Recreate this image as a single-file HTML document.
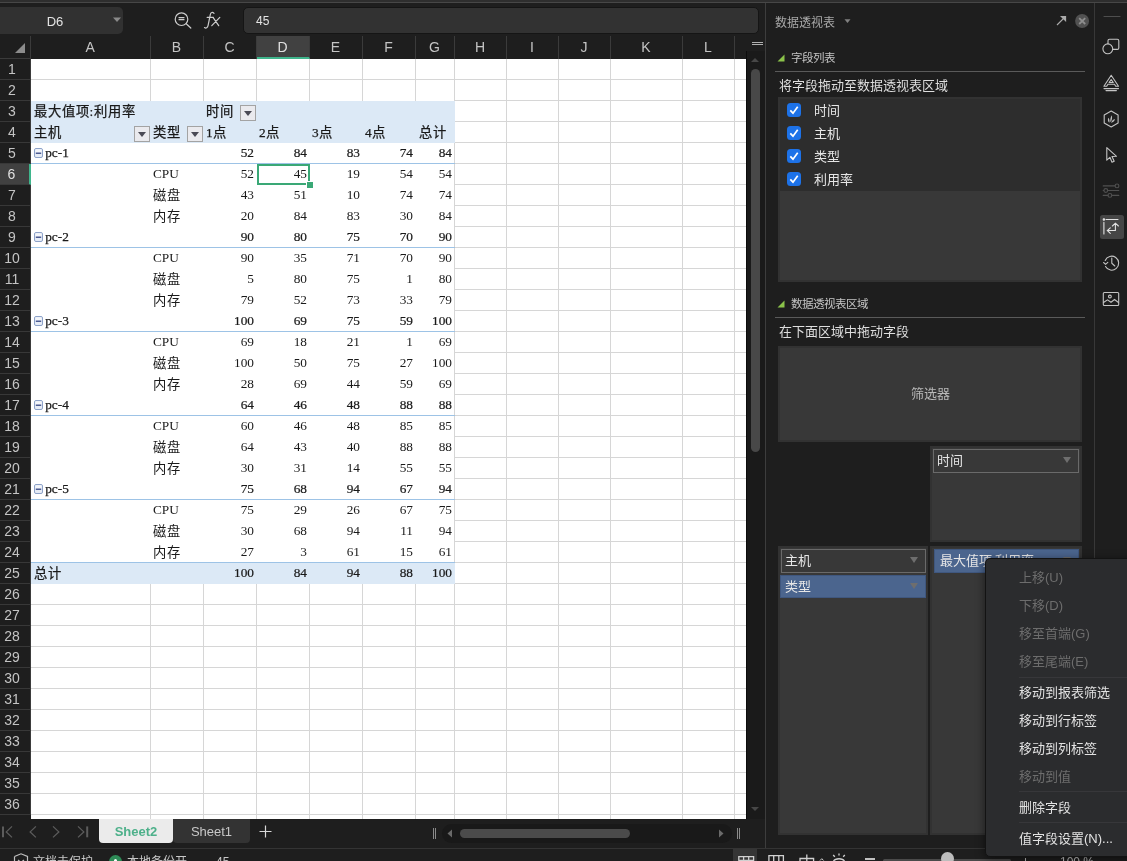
<!DOCTYPE html>
<html lang="zh-CN">
<head>
<meta charset="utf-8">
<title>Sheet</title>
<style>
html,body{margin:0;padding:0;}
body{width:1127px;height:861px;overflow:hidden;background:#1e1e1e;position:relative;-webkit-font-smoothing:antialiased;will-change:transform;font-family:"Liberation Sans",sans-serif;color:#d0d0d0;}
.abs{position:absolute;}
#top{left:0;top:0;width:1127px;height:2px;background:#2e2e2e;border-bottom:1px solid #474747;}
#namebox{left:-4px;top:7px;width:127px;height:27px;background:#313131;border-radius:5px;}
#namebox span{position:absolute;left:4px;width:110px;top:1px;line-height:27px;text-align:center;font-size:13px;color:#e4e4e4;}
#fbar{left:242.500px;top:7px;width:514px;height:25px;background:#323232;border:1px solid #151515;border-radius:5px;}
#fbar span{position:absolute;left:12.5px;top:1px;line-height:25px;font-size:12px;color:#e4e4e4;}
.ch{position:absolute;top:36px;height:22.5px;line-height:22px;text-align:center;font-size:14px;color:#c4c4c4;box-sizing:border-box;border-right:1px solid #3b3b3b;}
.rh{position:absolute;left:0;width:31px;border-right:1px solid #3b3b3b;height:21px;line-height:20px;font-size:14px;color:#c4c4c4;border-bottom:1px solid #383838;box-sizing:border-box;padding-right:6px;text-align:center;}
#sheet{left:31px;top:58.5px;width:715px;height:760px;background:#fff;overflow:hidden;}
.vl{position:absolute;width:1px;background:#d6d6d6;}
.hl{position:absolute;height:1px;background:#d6d6d6;}
.c{position:absolute;height:21px;line-height:20px;font-family:"Liberation Serif",serif;font-size:13.3px;color:#1a1a1a;white-space:nowrap;}
.b{-webkit-text-stroke:0.25px #1a1a1a;}
.k{letter-spacing:0.9px;margin-top:1px;}
.cj{margin-top:1px;letter-spacing:0.8px;}
.nb{-webkit-text-stroke:0.22px #1a1a1a;}
.r{text-align:right;}
.fb{position:absolute;width:16px;height:15.5px;box-sizing:border-box;border:1px solid #a3a3a3;background:#eaeaee;}
.fb:after{content:"";position:absolute;left:2.6px;top:5px;border-left:4.4px solid transparent;border-right:4.4px solid transparent;border-top:5px solid #4a4a55;}
.pt{position:absolute;font-size:12px;color:#c4c4c4;white-space:nowrap;}
.fld{position:absolute;left:814px;font-size:13px;color:#e6e6e6;line-height:16px;}
.cb{position:absolute;left:787px;width:14px;height:14px;border-radius:3.500px;background:#1d72e8;}
.cb svg{position:absolute;left:0;top:0;}
.box{position:absolute;background:#383838;border:2px solid #323232;box-sizing:border-box;}
.item{position:absolute;height:23.5px;box-sizing:border-box;border:1px solid #6a6a6a;font-size:13px;line-height:21px;color:#e6e6e6;padding-left:3px;}
.item:after{content:"";position:absolute;right:7.500px;top:7px;border-left:4.5px solid transparent;border-right:4.5px solid transparent;border-top:6px solid #6e6e6e;}
.item.sel{background:#4b658e;border-color:#3f577f;}
.mi{position:absolute;left:33px;margin-top:0.8px;font-size:13px;white-space:nowrap;line-height:16px;}
.dis{color:#6d6d6d;}
.en{color:#e2e2e2;}
.ms{position:absolute;left:33px;right:0;height:1px;background:#37373a;}
</style>
</head>
<body>
<div id="top" class="abs"></div>
<div id="namebox" class="abs"><span>D6</span></div>
<svg class="abs" style="left:112px;top:17px" width="10" height="6"><path d="M1 0.5 L9 0.5 L5 5 Z" fill="#8a8a8a"/></svg>
<svg class="abs" style="left:170px;top:8px" width="56" height="24" viewBox="170 8 56 24" fill="none" stroke="#cdcdcd" stroke-width="1.2" stroke-linecap="round"><circle cx="181.500" cy="19.2" r="6.3"/><path d="M179 17.600 H184 M179 19.700 H184 M186.200 23.700 L190.800 28"/><path d="M214 13.300 C212.600 11.800 210.800 12.200 210.300 14.600 L208.100 25.300 C207.600 27.800 206 28.600 204.500 27.600 M207.200 17.400 H213.400 M213 17.400 L218.700 25.700 M219.800 17.400 L211.800 25.700"/></svg>
<div id="fbar" class="abs"><span>45</span></div>

<svg class="abs" style="left:14px;top:42px" width="12" height="12"><path d="M11 1 L11 11 L1 11 Z" fill="#8c8c8c"/></svg>
<div class="abs" style="left:30px;top:36px;width:1px;height:22px;background:#3b3b3b"></div>
<div class="abs" style="left:0;top:58px;width:31px;height:1px;background:#3b3b3b"></div>
<div class="ch" style="left:31px;width:119.5px;">A</div>
<div class="ch" style="left:150.5px;width:53.0px;">B</div>
<div class="ch" style="left:203.5px;width:53.0px;">C</div>
<div class="ch" style="left:256.5px;width:53.0px;background:#414141;border-bottom:2px solid #3fb58c;color:#e0e0e0;">D</div>
<div class="ch" style="left:309.5px;width:53.0px;">E</div>
<div class="ch" style="left:362.5px;width:53.0px;">F</div>
<div class="ch" style="left:415.5px;width:39.0px;">G</div>
<div class="ch" style="left:454.5px;width:52.0px;">H</div>
<div class="ch" style="left:506.5px;width:52.0px;">I</div>
<div class="ch" style="left:558.5px;width:52.0px;">J</div>
<div class="ch" style="left:610.5px;width:72.0px;">K</div>
<div class="ch" style="left:682.5px;width:52.0px;">L</div>
<div class="rh" style="top:58.5px;">1</div>
<div class="rh" style="top:79.5px;">2</div>
<div class="rh" style="top:100.5px;">3</div>
<div class="rh" style="top:121.5px;">4</div>
<div class="rh" style="top:142.5px;">5</div>
<div class="rh" style="top:163.5px;background:#414141;border-right:2px solid #3fb58c;color:#e0e0e0;width:31px;">6</div>
<div class="rh" style="top:184.5px;">7</div>
<div class="rh" style="top:205.5px;">8</div>
<div class="rh" style="top:226.5px;">9</div>
<div class="rh" style="top:247.5px;">10</div>
<div class="rh" style="top:268.5px;">11</div>
<div class="rh" style="top:289.5px;">12</div>
<div class="rh" style="top:310.5px;">13</div>
<div class="rh" style="top:331.5px;">14</div>
<div class="rh" style="top:352.5px;">15</div>
<div class="rh" style="top:373.5px;">16</div>
<div class="rh" style="top:394.5px;">17</div>
<div class="rh" style="top:415.5px;">18</div>
<div class="rh" style="top:436.5px;">19</div>
<div class="rh" style="top:457.5px;">20</div>
<div class="rh" style="top:478.5px;">21</div>
<div class="rh" style="top:499.5px;">22</div>
<div class="rh" style="top:520.5px;">23</div>
<div class="rh" style="top:541.5px;">24</div>
<div class="rh" style="top:562.5px;">25</div>
<div class="rh" style="top:583.5px;">26</div>
<div class="rh" style="top:604.5px;">27</div>
<div class="rh" style="top:625.5px;">28</div>
<div class="rh" style="top:646.5px;">29</div>
<div class="rh" style="top:667.5px;">30</div>
<div class="rh" style="top:688.5px;">31</div>
<div class="rh" style="top:709.5px;">32</div>
<div class="rh" style="top:730.5px;">33</div>
<div class="rh" style="top:751.5px;">34</div>
<div class="rh" style="top:772.5px;">35</div>
<div class="rh" style="top:793.5px;">36</div>
<div id="sheet" class="abs">
<div class="vl" style="left:119.0px;top:0;height:42px"></div>
<div class="vl" style="left:119.0px;top:525.0px;height:236px"></div>
<div class="vl" style="left:172.0px;top:0;height:42px"></div>
<div class="vl" style="left:172.0px;top:525.0px;height:236px"></div>
<div class="vl" style="left:225.0px;top:0;height:42px"></div>
<div class="vl" style="left:225.0px;top:525.0px;height:236px"></div>
<div class="vl" style="left:278.0px;top:0;height:42px"></div>
<div class="vl" style="left:278.0px;top:525.0px;height:236px"></div>
<div class="vl" style="left:331.0px;top:0;height:42px"></div>
<div class="vl" style="left:331.0px;top:525.0px;height:236px"></div>
<div class="vl" style="left:384.0px;top:0;height:42px"></div>
<div class="vl" style="left:384.0px;top:525.0px;height:236px"></div>
<div class="vl" style="left:423.0px;top:0;height:760px"></div>
<div class="vl" style="left:475.0px;top:0;height:760px"></div>
<div class="vl" style="left:527.0px;top:0;height:760px"></div>
<div class="vl" style="left:579.0px;top:0;height:760px"></div>
<div class="vl" style="left:651.0px;top:0;height:760px"></div>
<div class="vl" style="left:703.0px;top:0;height:760px"></div>
<div class="hl" style="left:0;top:20.5px;width:715px"></div>
<div class="hl" style="left:423.5px;top:41.5px;width:291.5px"></div>
<div class="hl" style="left:423.5px;top:62.5px;width:291.5px"></div>
<div class="hl" style="left:423.5px;top:83.5px;width:291.5px"></div>
<div class="hl" style="left:423.5px;top:104.5px;width:291.5px"></div>
<div class="hl" style="left:423.5px;top:125.5px;width:291.5px"></div>
<div class="hl" style="left:423.5px;top:146.5px;width:291.5px"></div>
<div class="hl" style="left:423.5px;top:167.5px;width:291.5px"></div>
<div class="hl" style="left:423.5px;top:188.5px;width:291.5px"></div>
<div class="hl" style="left:423.5px;top:209.5px;width:291.5px"></div>
<div class="hl" style="left:423.5px;top:230.5px;width:291.5px"></div>
<div class="hl" style="left:423.5px;top:251.5px;width:291.5px"></div>
<div class="hl" style="left:423.5px;top:272.5px;width:291.5px"></div>
<div class="hl" style="left:423.5px;top:293.5px;width:291.5px"></div>
<div class="hl" style="left:423.5px;top:314.5px;width:291.5px"></div>
<div class="hl" style="left:423.5px;top:335.5px;width:291.5px"></div>
<div class="hl" style="left:423.5px;top:356.5px;width:291.5px"></div>
<div class="hl" style="left:423.5px;top:377.5px;width:291.5px"></div>
<div class="hl" style="left:423.5px;top:398.5px;width:291.5px"></div>
<div class="hl" style="left:423.5px;top:419.5px;width:291.5px"></div>
<div class="hl" style="left:423.5px;top:440.5px;width:291.5px"></div>
<div class="hl" style="left:423.5px;top:461.5px;width:291.5px"></div>
<div class="hl" style="left:423.5px;top:482.5px;width:291.5px"></div>
<div class="hl" style="left:423.5px;top:503.5px;width:291.5px"></div>
<div class="hl" style="left:423.5px;top:524.5px;width:291.5px"></div>
<div class="hl" style="left:0;top:545.5px;width:715px"></div>
<div class="hl" style="left:0;top:566.5px;width:715px"></div>
<div class="hl" style="left:0;top:587.5px;width:715px"></div>
<div class="hl" style="left:0;top:608.5px;width:715px"></div>
<div class="hl" style="left:0;top:629.5px;width:715px"></div>
<div class="hl" style="left:0;top:650.5px;width:715px"></div>
<div class="hl" style="left:0;top:671.5px;width:715px"></div>
<div class="hl" style="left:0;top:692.5px;width:715px"></div>
<div class="hl" style="left:0;top:713.5px;width:715px"></div>
<div class="hl" style="left:0;top:734.5px;width:715px"></div>
<div class="hl" style="left:0;top:755.5px;width:715px"></div>
<div class="abs" style="left:0;top:42.5px;width:424.0px;height:41.5px;background:#dce9f6"></div>
<div class="abs" style="left:0;top:504.0px;width:424.0px;height:21px;background:#dce9f6"></div>
<div class="hl" style="left:0;top:104.5px;width:423.5px;background:#9dc3e6"></div>
<div class="hl" style="left:0;top:188.5px;width:423.5px;background:#9dc3e6"></div>
<div class="hl" style="left:0;top:272.5px;width:423.5px;background:#9dc3e6"></div>
<div class="hl" style="left:0;top:356.5px;width:423.5px;background:#9dc3e6"></div>
<div class="hl" style="left:0;top:440.5px;width:423.5px;background:#9dc3e6"></div>
<div class="hl" style="left:0;top:503.5px;width:423.5px;background:#9dc3e6"></div>
<div class="c b k" style="left:3px;top:42.0px">最大值项:利用率</div>
<div class="c b k" style="left:175px;top:42.0px">时间</div>
<div class="fb" style="left:209px;top:46.5px"></div>
<div class="c b k" style="left:3px;top:63.0px">主机</div>
<div class="fb" style="left:103.19999999999999px;top:67.5px"></div>
<div class="c b k" style="left:122px;top:63.0px">类型</div>
<div class="fb" style="left:156.1px;top:67.5px"></div>
<div class="c b cj" style="left:175px;top:63.0px">1点</div>
<div class="c b cj" style="left:228px;top:63.0px">2点</div>
<div class="c b cj" style="left:281px;top:63.0px">3点</div>
<div class="c b cj" style="left:334px;top:63.0px">4点</div>
<div class="c b r k" style="left:384.5px;width:31.0px;top:63.0px">总计</div>
<svg class="abs" style="left:3px;top:89.5px" width="10" height="11"><rect x="0.5" y="0.5" width="8" height="9" rx="1.500" fill="#e6ecf6" stroke="#8da2c9"/><path d="M1.500 3 H7.500" stroke="#f4f6fa" stroke-width="3"/><path d="M1.800 5.200 H7.200" stroke="#27397a" stroke-width="1.200"/></svg>
<div class="c b" style="left:14.200000000000003px;top:84.0px">pc-1</div>
<div class="c r nb" style="left:172.5px;width:50.5px;top:84.0px">52</div>
<div class="c r nb" style="left:225.5px;width:50.5px;top:84.0px">84</div>
<div class="c r nb" style="left:278.5px;width:50.5px;top:84.0px">83</div>
<div class="c r nb" style="left:331.5px;width:50.5px;top:84.0px">74</div>
<div class="c r nb" style="left:384.5px;width:36.5px;top:84.0px">84</div>
<div class="c" style="left:122px;top:105.0px">CPU</div>
<div class="c r" style="left:172.5px;width:50.5px;top:105.0px">52</div>
<div class="c r" style="left:225.5px;width:50.5px;top:105.0px">45</div>
<div class="c r" style="left:278.5px;width:50.5px;top:105.0px">19</div>
<div class="c r" style="left:331.5px;width:50.5px;top:105.0px">54</div>
<div class="c r" style="left:384.5px;width:36.5px;top:105.0px">54</div>
<div class="c cj" style="left:122px;top:126.0px">磁盘</div>
<div class="c r" style="left:172.5px;width:50.5px;top:126.0px">43</div>
<div class="c r" style="left:225.5px;width:50.5px;top:126.0px">51</div>
<div class="c r" style="left:278.5px;width:50.5px;top:126.0px">10</div>
<div class="c r" style="left:331.5px;width:50.5px;top:126.0px">74</div>
<div class="c r" style="left:384.5px;width:36.5px;top:126.0px">74</div>
<div class="c cj" style="left:122px;top:147.0px">内存</div>
<div class="c r" style="left:172.5px;width:50.5px;top:147.0px">20</div>
<div class="c r" style="left:225.5px;width:50.5px;top:147.0px">84</div>
<div class="c r" style="left:278.5px;width:50.5px;top:147.0px">83</div>
<div class="c r" style="left:331.5px;width:50.5px;top:147.0px">30</div>
<div class="c r" style="left:384.5px;width:36.5px;top:147.0px">84</div>
<svg class="abs" style="left:3px;top:173.5px" width="10" height="11"><rect x="0.5" y="0.5" width="8" height="9" rx="1.500" fill="#e6ecf6" stroke="#8da2c9"/><path d="M1.500 3 H7.500" stroke="#f4f6fa" stroke-width="3"/><path d="M1.800 5.200 H7.200" stroke="#27397a" stroke-width="1.200"/></svg>
<div class="c b" style="left:14.200000000000003px;top:168.0px">pc-2</div>
<div class="c r nb" style="left:172.5px;width:50.5px;top:168.0px">90</div>
<div class="c r nb" style="left:225.5px;width:50.5px;top:168.0px">80</div>
<div class="c r nb" style="left:278.5px;width:50.5px;top:168.0px">75</div>
<div class="c r nb" style="left:331.5px;width:50.5px;top:168.0px">70</div>
<div class="c r nb" style="left:384.5px;width:36.5px;top:168.0px">90</div>
<div class="c" style="left:122px;top:189.0px">CPU</div>
<div class="c r" style="left:172.5px;width:50.5px;top:189.0px">90</div>
<div class="c r" style="left:225.5px;width:50.5px;top:189.0px">35</div>
<div class="c r" style="left:278.5px;width:50.5px;top:189.0px">71</div>
<div class="c r" style="left:331.5px;width:50.5px;top:189.0px">70</div>
<div class="c r" style="left:384.5px;width:36.5px;top:189.0px">90</div>
<div class="c cj" style="left:122px;top:210.0px">磁盘</div>
<div class="c r" style="left:172.5px;width:50.5px;top:210.0px">5</div>
<div class="c r" style="left:225.5px;width:50.5px;top:210.0px">80</div>
<div class="c r" style="left:278.5px;width:50.5px;top:210.0px">75</div>
<div class="c r" style="left:331.5px;width:50.5px;top:210.0px">1</div>
<div class="c r" style="left:384.5px;width:36.5px;top:210.0px">80</div>
<div class="c cj" style="left:122px;top:231.0px">内存</div>
<div class="c r" style="left:172.5px;width:50.5px;top:231.0px">79</div>
<div class="c r" style="left:225.5px;width:50.5px;top:231.0px">52</div>
<div class="c r" style="left:278.5px;width:50.5px;top:231.0px">73</div>
<div class="c r" style="left:331.5px;width:50.5px;top:231.0px">33</div>
<div class="c r" style="left:384.5px;width:36.5px;top:231.0px">79</div>
<svg class="abs" style="left:3px;top:257.5px" width="10" height="11"><rect x="0.5" y="0.5" width="8" height="9" rx="1.500" fill="#e6ecf6" stroke="#8da2c9"/><path d="M1.500 3 H7.500" stroke="#f4f6fa" stroke-width="3"/><path d="M1.800 5.200 H7.200" stroke="#27397a" stroke-width="1.200"/></svg>
<div class="c b" style="left:14.200000000000003px;top:252.0px">pc-3</div>
<div class="c r nb" style="left:172.5px;width:50.5px;top:252.0px">100</div>
<div class="c r nb" style="left:225.5px;width:50.5px;top:252.0px">69</div>
<div class="c r nb" style="left:278.5px;width:50.5px;top:252.0px">75</div>
<div class="c r nb" style="left:331.5px;width:50.5px;top:252.0px">59</div>
<div class="c r nb" style="left:384.5px;width:36.5px;top:252.0px">100</div>
<div class="c" style="left:122px;top:273.0px">CPU</div>
<div class="c r" style="left:172.5px;width:50.5px;top:273.0px">69</div>
<div class="c r" style="left:225.5px;width:50.5px;top:273.0px">18</div>
<div class="c r" style="left:278.5px;width:50.5px;top:273.0px">21</div>
<div class="c r" style="left:331.5px;width:50.5px;top:273.0px">1</div>
<div class="c r" style="left:384.5px;width:36.5px;top:273.0px">69</div>
<div class="c cj" style="left:122px;top:294.0px">磁盘</div>
<div class="c r" style="left:172.5px;width:50.5px;top:294.0px">100</div>
<div class="c r" style="left:225.5px;width:50.5px;top:294.0px">50</div>
<div class="c r" style="left:278.5px;width:50.5px;top:294.0px">75</div>
<div class="c r" style="left:331.5px;width:50.5px;top:294.0px">27</div>
<div class="c r" style="left:384.5px;width:36.5px;top:294.0px">100</div>
<div class="c cj" style="left:122px;top:315.0px">内存</div>
<div class="c r" style="left:172.5px;width:50.5px;top:315.0px">28</div>
<div class="c r" style="left:225.5px;width:50.5px;top:315.0px">69</div>
<div class="c r" style="left:278.5px;width:50.5px;top:315.0px">44</div>
<div class="c r" style="left:331.5px;width:50.5px;top:315.0px">59</div>
<div class="c r" style="left:384.5px;width:36.5px;top:315.0px">69</div>
<svg class="abs" style="left:3px;top:341.5px" width="10" height="11"><rect x="0.5" y="0.5" width="8" height="9" rx="1.500" fill="#e6ecf6" stroke="#8da2c9"/><path d="M1.500 3 H7.500" stroke="#f4f6fa" stroke-width="3"/><path d="M1.800 5.200 H7.200" stroke="#27397a" stroke-width="1.200"/></svg>
<div class="c b" style="left:14.200000000000003px;top:336.0px">pc-4</div>
<div class="c r nb" style="left:172.5px;width:50.5px;top:336.0px">64</div>
<div class="c r nb" style="left:225.5px;width:50.5px;top:336.0px">46</div>
<div class="c r nb" style="left:278.5px;width:50.5px;top:336.0px">48</div>
<div class="c r nb" style="left:331.5px;width:50.5px;top:336.0px">88</div>
<div class="c r nb" style="left:384.5px;width:36.5px;top:336.0px">88</div>
<div class="c" style="left:122px;top:357.0px">CPU</div>
<div class="c r" style="left:172.5px;width:50.5px;top:357.0px">60</div>
<div class="c r" style="left:225.5px;width:50.5px;top:357.0px">46</div>
<div class="c r" style="left:278.5px;width:50.5px;top:357.0px">48</div>
<div class="c r" style="left:331.5px;width:50.5px;top:357.0px">85</div>
<div class="c r" style="left:384.5px;width:36.5px;top:357.0px">85</div>
<div class="c cj" style="left:122px;top:378.0px">磁盘</div>
<div class="c r" style="left:172.5px;width:50.5px;top:378.0px">64</div>
<div class="c r" style="left:225.5px;width:50.5px;top:378.0px">43</div>
<div class="c r" style="left:278.5px;width:50.5px;top:378.0px">40</div>
<div class="c r" style="left:331.5px;width:50.5px;top:378.0px">88</div>
<div class="c r" style="left:384.5px;width:36.5px;top:378.0px">88</div>
<div class="c cj" style="left:122px;top:399.0px">内存</div>
<div class="c r" style="left:172.5px;width:50.5px;top:399.0px">30</div>
<div class="c r" style="left:225.5px;width:50.5px;top:399.0px">31</div>
<div class="c r" style="left:278.5px;width:50.5px;top:399.0px">14</div>
<div class="c r" style="left:331.5px;width:50.5px;top:399.0px">55</div>
<div class="c r" style="left:384.5px;width:36.5px;top:399.0px">55</div>
<svg class="abs" style="left:3px;top:425.5px" width="10" height="11"><rect x="0.5" y="0.5" width="8" height="9" rx="1.500" fill="#e6ecf6" stroke="#8da2c9"/><path d="M1.500 3 H7.500" stroke="#f4f6fa" stroke-width="3"/><path d="M1.800 5.200 H7.200" stroke="#27397a" stroke-width="1.200"/></svg>
<div class="c b" style="left:14.200000000000003px;top:420.0px">pc-5</div>
<div class="c r nb" style="left:172.5px;width:50.5px;top:420.0px">75</div>
<div class="c r nb" style="left:225.5px;width:50.5px;top:420.0px">68</div>
<div class="c r nb" style="left:278.5px;width:50.5px;top:420.0px">94</div>
<div class="c r nb" style="left:331.5px;width:50.5px;top:420.0px">67</div>
<div class="c r nb" style="left:384.5px;width:36.5px;top:420.0px">94</div>
<div class="c" style="left:122px;top:441.0px">CPU</div>
<div class="c r" style="left:172.5px;width:50.5px;top:441.0px">75</div>
<div class="c r" style="left:225.5px;width:50.5px;top:441.0px">29</div>
<div class="c r" style="left:278.5px;width:50.5px;top:441.0px">26</div>
<div class="c r" style="left:331.5px;width:50.5px;top:441.0px">67</div>
<div class="c r" style="left:384.5px;width:36.5px;top:441.0px">75</div>
<div class="c cj" style="left:122px;top:462.0px">磁盘</div>
<div class="c r" style="left:172.5px;width:50.5px;top:462.0px">30</div>
<div class="c r" style="left:225.5px;width:50.5px;top:462.0px">68</div>
<div class="c r" style="left:278.5px;width:50.5px;top:462.0px">94</div>
<div class="c r" style="left:331.5px;width:50.5px;top:462.0px">11</div>
<div class="c r" style="left:384.5px;width:36.5px;top:462.0px">94</div>
<div class="c cj" style="left:122px;top:483.0px">内存</div>
<div class="c r" style="left:172.5px;width:50.5px;top:483.0px">27</div>
<div class="c r" style="left:225.5px;width:50.5px;top:483.0px">3</div>
<div class="c r" style="left:278.5px;width:50.5px;top:483.0px">61</div>
<div class="c r" style="left:331.5px;width:50.5px;top:483.0px">15</div>
<div class="c r" style="left:384.5px;width:36.5px;top:483.0px">61</div>
<div class="c b k" style="left:3px;top:504.0px">总计</div>
<div class="c r nb" style="left:172.5px;width:50.5px;top:504.0px">100</div>
<div class="c r nb" style="left:225.5px;width:50.5px;top:504.0px">84</div>
<div class="c r nb" style="left:278.5px;width:50.5px;top:504.0px">94</div>
<div class="c r nb" style="left:331.5px;width:50.5px;top:504.0px">88</div>
<div class="c r nb" style="left:384.5px;width:36.5px;top:504.0px">100</div>
<div class="abs" style="left:225.5px;top:105.0px;width:49px;height:17.5px;border:2px solid #3aa876;"></div>
<div class="abs" style="left:275px;top:122.5px;width:6px;height:6px;background:#3aa876;border:1px solid #fff"></div>
</div>
<div class="abs" style="left:746px;top:51px;width:19px;height:768px;background:#1a1a1a;border-left:1px solid #0c0c0c;box-sizing:border-box"></div>
<svg class="abs" style="left:751px;top:57px" width="9" height="6"><path d="M0 5 L4 1 L8 5 Z" fill="#474747"/></svg>
<div class="abs" style="left:751px;top:68.700px;width:9px;height:383.500px;border-radius:4.500px;background:#484848"></div>
<svg class="abs" style="left:751px;top:806px" width="9" height="6"><path d="M0 1 L4 5 L8 1 Z" fill="#474747"/></svg>
<div class="abs" style="left:752px;top:42px;width:11px;height:1px;background:#b0b0b0"></div>
<div class="abs" style="left:752px;top:44px;width:11px;height:1px;background:#b0b0b0"></div>
<div class="abs" style="left:765px;top:3px;width:1px;height:845px;background:#3d3d3d"></div>
<svg class="abs" style="left:0;top:820px" width="95" height="24" viewBox="0 820 95 24" fill="none" stroke="#5c5c5c" stroke-width="1.300"><path d="M3 826.400 V837.300" stroke-width="2"/><path d="M12 826.400 L6.300 831.900 L12 837.400"/><path d="M35.900 826.400 L30.200 831.900 L35.900 837.400"/><path d="M53 826.400 L58.800 831.900 L53 837.400"/><path d="M78 826.400 L83.800 831.900 L78 837.400"/><path d="M87.200 826.400 V837.300" stroke-width="2"/></svg>
<div class="abs" style="left:99px;top:819px;width:74px;height:23.5px;background:#ebebeb;border-radius:0 0 4px 4px;text-align:center;line-height:25px;font-size:13px;font-weight:bold;color:#4db08a;">Sheet2</div>
<div class="abs" style="left:173px;top:819px;width:77px;height:23.5px;background:#333;border-radius:0 0 4px 4px;text-align:center;line-height:25px;font-size:13px;color:#c8c8c8;">Sheet1</div>
<svg class="abs" style="left:259px;top:825px" width="13" height="13" stroke="#d8d8d8" stroke-width="1.2"><path d="M6.5 0.5 V12.5 M0.5 6.5 H12.5"/></svg>
<div class="abs" style="left:432.500px;top:828px;width:1px;height:11px;background:#8a8a8a"></div><div class="abs" style="left:435px;top:828px;width:1px;height:11px;background:#8a8a8a"></div>
<div class="abs" style="left:441.500px;top:823.500px;width:290px;height:19px;border-radius:9.500px;background:#191919"></div>
<svg class="abs" style="left:447px;top:829px" width="6" height="9"><path d="M5 0.5 L0.5 4.5 L5 8.5 Z" fill="#6a6a6a"/></svg>
<div class="abs" style="left:460px;top:829px;width:170px;height:9px;border-radius:5px;background:#4b4b4b"></div>
<svg class="abs" style="left:718px;top:829px" width="6" height="9"><path d="M1 0.5 L5.5 4.5 L1 8.5 Z" fill="#6a6a6a"/></svg>
<div class="abs" style="left:736.500px;top:828px;width:1px;height:11px;background:#8a8a8a"></div><div class="abs" style="left:739px;top:828px;width:1px;height:11px;background:#8a8a8a"></div>
<div class="abs" style="left:0;top:847.5px;width:1127px;height:1px;background:#343434"></div>
<svg class="abs" style="left:13px;top:853px" width="16" height="12" fill="none" stroke="#c0c0c0" stroke-width="1.2"><path d="M1.5 3.5 L8 0.8 L14.5 3.5 V12"/><path d="M1.5 3.5 V12"/><path d="M5 7 L11 12 M11 7 L5 12"/></svg>
<div class="abs" style="left:33px;top:854px;font-size:12px;color:#c8c8c8;line-height:16px;white-space:nowrap">文档未保护</div>
<div class="abs" style="left:108.500px;top:855px;width:13px;height:13px;border-radius:7px;background:#2e8b57"></div>
<div class="abs" style="left:113.500px;top:859px;width:3px;height:3px;border-radius:2px;background:#fff"></div>
<div class="abs" style="left:127px;top:854px;font-size:12px;color:#c8c8c8;line-height:16px;white-space:nowrap">本地备份开</div>
<div class="abs" style="left:216px;top:854px;font-size:12px;color:#c8c8c8;line-height:16px;">45</div>
<div class="abs" style="left:733px;top:848.500px;width:24px;height:14px;background:#353535"></div>
<svg class="abs" style="left:730px;top:850px" width="130" height="12" viewBox="730 850 130 12" fill="none" stroke="#d0d0d0" stroke-width="1.300"><path d="M738.800 864 V856.600 H753.600 V864 M743.600 856.600 V860.400 M748.700 856.600 V860.400 M738.800 860.400 H753.600"/><path d="M768.900 864 V855.700 H783.400 V864 M773.700 855.700 V864 M778.800 855.700 V864"/><path d="M800 862 V858.500 H813.600 V862 M806.800 854.500 V862"/><path d="M820 860.500 l1.800 -1.800 l1.800 1.800" stroke-width="1"/><path d="M833.500 861 C835.500 858 842.500 858 844.500 861 M839 855.500 V853.500 M834.800 856.800 L833.200 855 M843.200 856.800 L844.800 855"/></svg>
<div class="abs" style="left:865px;top:858px;width:10px;height:2px;background:#c0c0c0"></div>
<div class="abs" style="left:883px;top:858.500px;width:128px;height:3px;background:#4a4a4a;border-radius:2px"></div>
<div class="abs" style="left:941px;top:851.500px;width:13px;height:13px;border-radius:7px;background:#bdbdbd"></div>
<div class="abs" style="left:1020.500px;top:860.500px;width:10px;height:1.500px;background:#c0c0c0"></div><div class="abs" style="left:1024.800px;top:857.500px;width:1.500px;height:8px;background:#c0c0c0"></div>
<div class="abs" style="left:1060px;top:854px;font-size:12px;color:#c8c8c8;line-height:16px;white-space:nowrap">100 %</div>
<div class="pt" style="left:775px;top:15px;line-height:16px;color:#a8a8a8">数据透视表</div>
<svg class="abs" style="left:843.500px;top:19px" width="8" height="5"><path d="M0.500 0.300 L6.500 0.300 L3.500 4 Z" fill="#808080"/></svg>
<svg class="abs" style="left:1050px;top:10px" width="20" height="20" viewBox="1050 10 20 20"><path d="M1057 25 L1064 18" stroke="#ababab" stroke-width="1.100" fill="none"/><path d="M1060 15.900 H1066.100 V22 Z" fill="#ababab"/></svg>
<svg class="abs" style="left:1074px;top:13px" width="16" height="16" viewBox="1074 13 16 16"><circle cx="1082.100" cy="21" r="7" fill="#515151"/><path d="M1079.200 18.200 L1085.200 24 M1085.200 18.200 L1079.200 24" stroke="#8e8e8e" stroke-width="1.800"/></svg>
<svg class="abs" style="left:777.300px;top:53.500px" width="8" height="8"><path d="M7.5 0.5 V7.5 H0.5 Z" fill="#8bc34a"/></svg>
<div class="pt" style="left:791px;top:50px;line-height:16px;font-size:11.5px">字段列表</div>
<div class="abs" style="left:775px;top:70.5px;width:310px;height:1px;background:#5a5a5a"></div>
<div class="pt" style="left:779px;top:77px;line-height:17px;font-size:13px;color:#dedede">将字段拖动至数据透视表区域</div>
<div class="box" style="left:778px;top:97px;width:304px;height:185px;"></div>
<div class="abs" style="left:780px;top:99px;width:300px;height:92px;background:#2d2d2d"></div>
<div class="cb" style="top:103px"><svg width="14" height="14" fill="none" stroke="#fff" stroke-width="1.7"><path d="M3.300 7.300 L6 10.200 L10.700 3.800"/></svg></div>
<div class="fld" style="top:102.7px">时间</div>
<div class="cb" style="top:126px"><svg width="14" height="14" fill="none" stroke="#fff" stroke-width="1.7"><path d="M3.300 7.300 L6 10.200 L10.700 3.800"/></svg></div>
<div class="fld" style="top:125.7px">主机</div>
<div class="cb" style="top:149px"><svg width="14" height="14" fill="none" stroke="#fff" stroke-width="1.7"><path d="M3.300 7.300 L6 10.200 L10.700 3.800"/></svg></div>
<div class="fld" style="top:148.7px">类型</div>
<div class="cb" style="top:172px"><svg width="14" height="14" fill="none" stroke="#fff" stroke-width="1.7"><path d="M3.300 7.300 L6 10.200 L10.700 3.800"/></svg></div>
<div class="fld" style="top:171.7px">利用率</div>
<svg class="abs" style="left:777.300px;top:299.500px" width="8" height="8"><path d="M7.5 0.5 V7.5 H0.5 Z" fill="#8bc34a"/></svg>
<div class="pt" style="left:791px;top:296px;line-height:16px;font-size:11.5px">数据透视表区域</div>
<div class="abs" style="left:775px;top:317px;width:310px;height:1px;background:#5a5a5a"></div>
<div class="pt" style="left:779px;top:323px;line-height:17px;font-size:13px;color:#dedede">在下面区域中拖动字段</div>
<div class="box" style="left:778px;top:346px;width:304px;height:96px;"></div>
<div class="pt" style="left:778px;width:304px;top:386px;text-align:center;line-height:16px;font-size:13px;color:#b8b8b8">筛选器</div>
<div class="box" style="left:930px;top:446px;width:152px;height:96px;"></div>
<div class="item" style="left:933px;top:449px;width:146px;">时间</div>
<div class="box" style="left:778px;top:546px;width:150px;height:289px;"></div>
<div class="item" style="left:781px;top:549px;width:145px;">主机</div>
<div class="item sel" style="left:780px;top:574.500px;width:146px;padding-left:4px">类型</div>
<div class="box" style="left:930px;top:546px;width:152px;height:289px;"></div>
<div class="item sel" style="left:934px;top:549px;width:145px;overflow:hidden;padding-left:4.500px">最大值项:利用率</div>
<div class="abs" style="left:1094px;top:3px;width:1px;height:845px;background:#383838"></div>
<div class="abs" style="left:1100px;top:215px;width:24px;height:23.5px;border-radius:2.5px;background:#464646"></div>
<svg class="abs" style="left:0;top:0" width="1127" height="320" fill="none" stroke="#c4c4c4" stroke-width="1.100" stroke-linecap="round"><path d="M1104 16.500 H1120" stroke="#4e4e4e"/><rect x="1108" y="39.2" width="10.800" height="10.200" rx="1.500"/><circle cx="1107.800" cy="48.800" r="4.900" fill="#1e1e1e"/><path d="M1111.200 75.300 L1118.500 86.200 H1115.700 L1114.500 84.300 H1107.900 L1106.700 86.200 H1103.900 Z M1111.200 79.700 L1113.300 82.500 H1109.100 Z M1104 88.600 H1118.500 M1106 90.600 H1116.400" stroke-linejoin="round" stroke-width="1.100"/><path d="M1111.200 111.100 L1118.100 115 V123.100 L1111.200 127 L1104.200 123.100 V115 Z" stroke-linejoin="round"/><path d="M1109.300 122.800 C1107.800 121.500 1107.600 119.500 1108.300 117.800 C1109.500 119.200 1109.900 121 1109.300 122.800 Z M1110.400 122.300 C1110 119.800 1110.600 117.300 1111.700 115.300 C1112.500 117.800 1112 120.300 1110.400 122.300 Z M1111 122.800 C1111.800 120.800 1113.200 119.600 1114.900 119 C1114.600 121 1113.200 122.400 1111 122.800 Z" fill="#bdbdbd" stroke="none"/><path d="M1106.800 147.600 V160.200 L1109.900 157.300 L1112 162.300 L1114.200 161.300 L1112 156.500 L1116.500 156.300 Z" stroke-linejoin="round"/><g stroke="#505050"><path d="M1103.200 185.900 H1115 M1103.200 190.500 H1103.800 M1107.800 190.500 H1118.800 M1103.200 195.400 H1107.900 M1111.900 195.400 H1118.800"/><circle cx="1117" cy="185.900" r="1.900"/><circle cx="1105.800" cy="190.500" r="1.900"/><circle cx="1109.900" cy="195.400" r="1.900"/></g><g stroke="#e2e2e2"><circle cx="1103.900" cy="219.500" r="0.700" fill="#e2e2e2"/><path d="M1106 219.500 H1118 M1103.900 222.400 V234"/><path d="M1115.400 223.500 V230.500 H1107.400 M1112.400 226 L1115.400 223.200 L1118.400 226 M1110.300 227.800 L1107.300 230.500 L1110.300 233.400"/></g><path d="M1105.200 260.500 A7 7 0 1 1 1105.500 266.500"/><path d="M1103.600 262.500 L1105.600 264.300 L1107.800 262.300"/><path d="M1111.800 258 V263.200 L1114.800 266"/><rect x="1103.300" y="292.500" width="15.400" height="13" rx="1"/><circle cx="1109.900" cy="296.500" r="1.400"/><path d="M1103.500 302.500 L1107.500 299.800 L1111 302.200 L1114.500 299.500 L1118.500 302.500"/></svg>
<div class="abs" style="left:985px;top:558px;width:150px;height:297px;background:#2b2c2e;border:1px solid #131313;border-radius:5px;box-shadow:0 2px 10px rgba(0,0,0,.55);overflow:hidden">
<div class="mi dis" style="top:10px">上移(U)</div>
<div class="mi dis" style="top:38px">下移(D)</div>
<div class="mi dis" style="top:66px">移至首端(G)</div>
<div class="mi dis" style="top:94px">移至尾端(E)</div>
<div class="mi en" style="top:125px">移动到报表筛选</div>
<div class="mi en" style="top:153px">移动到行标签</div>
<div class="mi en" style="top:181px">移动到列标签</div>
<div class="mi dis" style="top:209px">移动到值</div>
<div class="mi en" style="top:240px">删除字段</div>
<div class="mi en" style="top:271px">值字段设置(N)...</div>
<div class="ms" style="top:117.5px"></div>
<div class="ms" style="top:232px"></div>
<div class="ms" style="top:263px"></div>
</div>
</body></html>
